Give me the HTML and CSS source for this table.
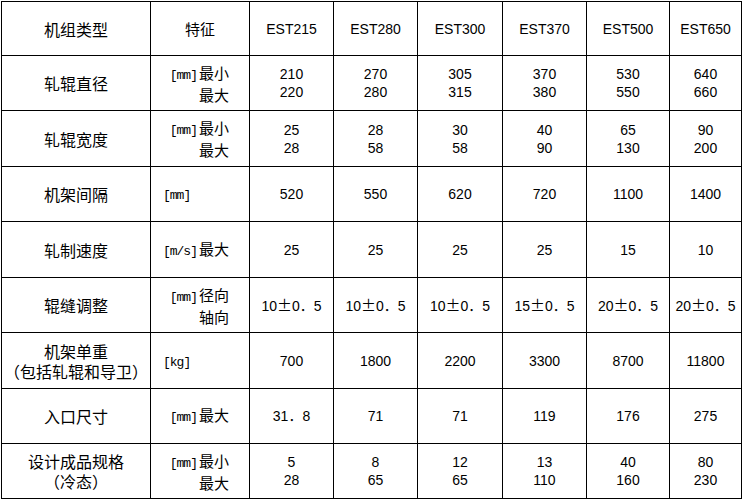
FILE: index.html
```html
<!DOCTYPE html>
<html lang="zh">
<head>
<meta charset="utf-8">
<link rel="stylesheet" href="styles.css">
</head>
<body>
<table class="spec">
  <colgroup>
    <col class="c-name"><col class="c-feat"><col class="c-v"><col class="c-v"><col class="c-v5"><col class="c-v"><col class="c-v3"><col class="c-last">
  </colgroup>
  <tr class="r54">
    <td class="name">机组类型</td>
    <td class="feat center">特征</td>
    <td>EST215</td><td>EST280</td><td>EST300</td><td>EST370</td><td>EST500</td><td>EST650</td>
  </tr>
  <tr class="r55">
    <td class="name">轧辊直径</td>
    <td class="feat right"><span class="u">[mm]</span>最小<br>最大</td>
    <td>210<br>220</td><td>270<br>280</td><td>305<br>315</td><td>370<br>380</td><td>530<br>550</td><td>640<br>660</td>
  </tr>
  <tr class="r56">
    <td class="name">轧辊宽度</td>
    <td class="feat right"><span class="u">[mm]</span>最小<br>最大</td>
    <td>25<br>28</td><td>28<br>58</td><td>30<br>58</td><td>40<br>90</td><td>65<br>130</td><td>90<br>200</td>
  </tr>
  <tr class="r55">
    <td class="name">机架间隔</td>
    <td class="feat left"><span class="u">[mm]</span></td>
    <td>520</td><td>550</td><td>620</td><td>720</td><td>1100</td><td>1400</td>
  </tr>
  <tr class="r56">
    <td class="name">轧制速度</td>
    <td class="feat right"><span class="u">[m/s]</span>最大</td>
    <td>25</td><td>25</td><td>25</td><td>25</td><td>15</td><td>10</td>
  </tr>
  <tr class="r55">
    <td class="name">辊缝调整</td>
    <td class="feat right"><span class="u">[mm]</span>径向<br>轴向</td>
    <td>10<span class="pm">±</span>0．5</td><td>10<span class="pm">±</span>0．5</td><td>10<span class="pm">±</span>0．5</td><td>15<span class="pm">±</span>0．5</td><td>20<span class="pm">±</span>0．5</td><td>20<span class="pm">±</span>0．5</td>
  </tr>
  <tr class="r56">
    <td class="name">机架单重<br><span class="po">（</span>包括轧辊和导卫<span class="pc">）</span></td>
    <td class="feat left"><span class="u">[kg]</span></td>
    <td>700</td><td>1800</td><td>2200</td><td>3300</td><td>8700</td><td>11800</td>
  </tr>
  <tr class="r55">
    <td class="name">入口尺寸</td>
    <td class="feat right"><span class="u">[mm]</span>最大</td>
    <td>31．8</td><td>71</td><td>71</td><td>119</td><td>176</td><td>275</td>
  </tr>
  <tr class="r55">
    <td class="name">设计成品规格<br><span class="po">（</span>冷态<span class="pc">）</span></td>
    <td class="feat right"><span class="u">[mm]</span>最小<br>最大</td>
    <td>5<br>28</td><td>8<br>65</td><td>12<br>65</td><td>13<br>110</td><td>40<br>160</td><td>80<br>230</td>
  </tr>
</table>
</body>
</html>
```

FILE: styles.css
```css
html, body {
  margin: 0;
  padding: 0;
  background: #ffffff;
}

.spec {
  margin: 1px 0 0 1px;
  width: 741px;
  border-collapse: collapse;
  table-layout: fixed;
  font-family: "Liberation Sans", "Noto Sans CJK SC", sans-serif;
  font-size: 14px;
  color: #000;
}

.c-name { width: 149px; }
.c-feat { width: 99px; }
.c-v { width: 84px; }
.c-v5 { width: 85px; }
.c-v3 { width: 83px; }
.c-last { width: 72px; }

.spec td {
  border: 1px solid #000;
  padding: 0;
  text-align: center;
  vertical-align: middle;
  line-height: 18px;
}

.r54 { height: 54px; }
.r55 { height: 55px; }
.r56 { height: 56px; }

.spec td.name {
  font-family: "Noto Sans CJK SC", sans-serif;
  font-size: 16px;
  line-height: 20px;
}

.po, .pc {
  display: inline-block;
  width: 16px;
}
.po { text-align: right; }
.pc { text-align: left; }

.spec td.feat {
  font-family: "Noto Sans CJK SC", sans-serif;
  font-size: 15px;
  line-height: 19px;
}

.spec td.center { text-align: center; }
.spec td.right { text-align: right; padding-right: 20px; }
.spec td.left { text-align: left; padding-left: 12px; }

.u {
  font-family: "Liberation Mono", monospace;
  font-size: 13px;
  letter-spacing: -1px;
  margin-right: 2px;
}

.pm {
  font-family: "Noto Sans CJK SC", sans-serif;
  font-size: 15px;
}
```
